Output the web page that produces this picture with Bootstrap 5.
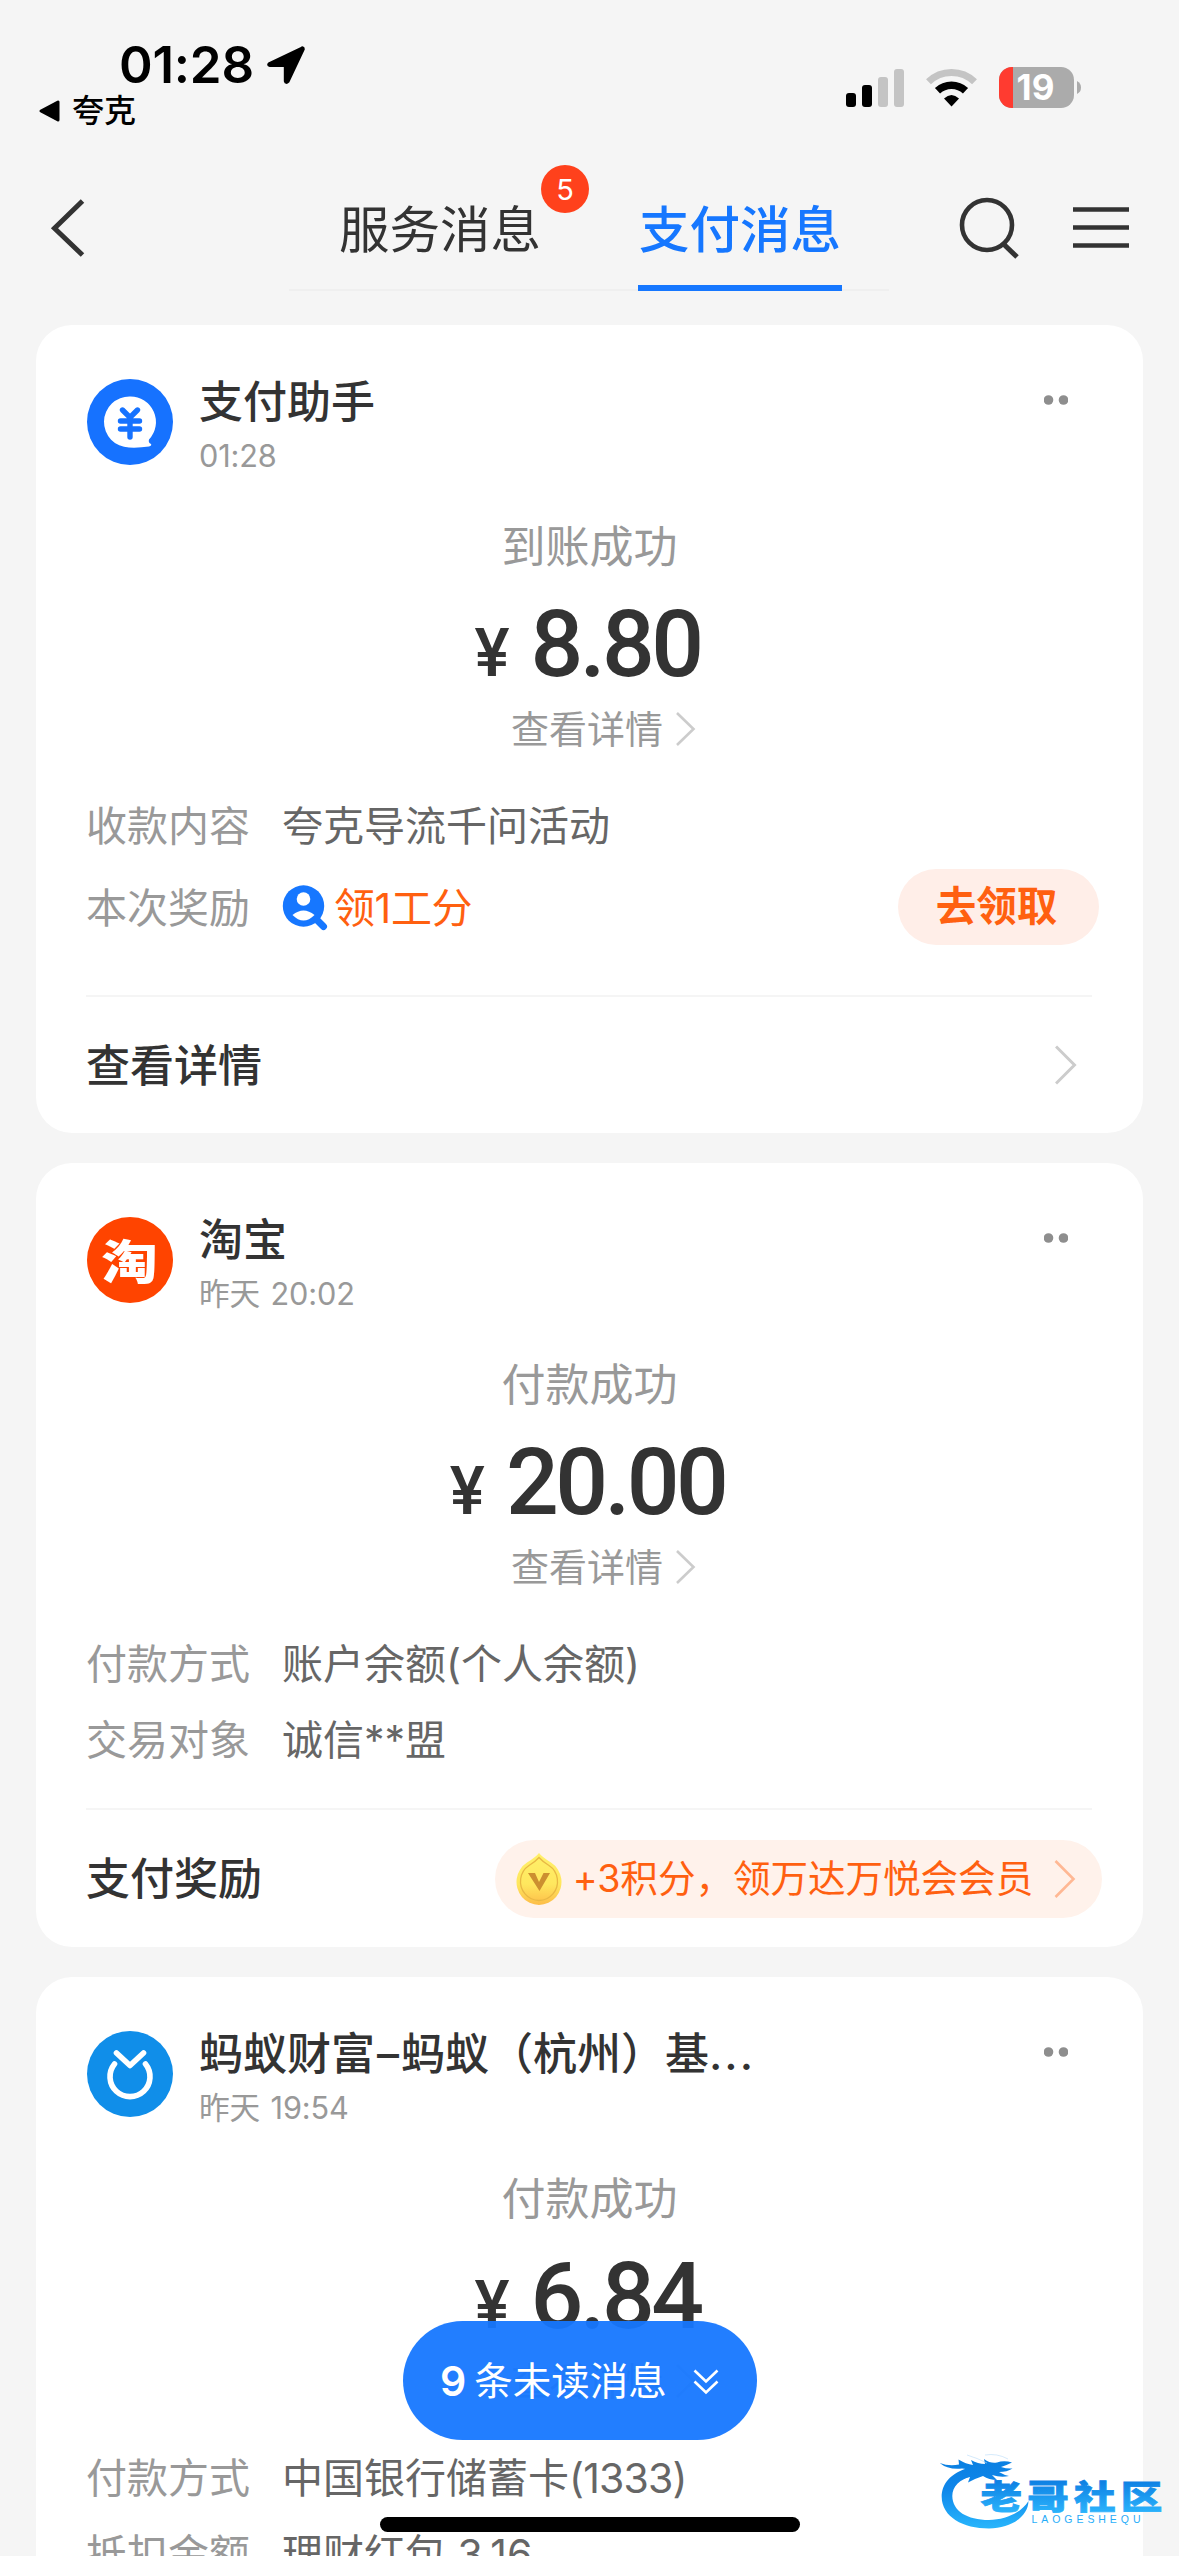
<!DOCTYPE html>
<html lang="zh-CN">
<head>
<meta charset="utf-8">
<meta name="viewport" content="width=device-width, initial-scale=1">
<title>支付消息</title>
<link href="https://cdn.jsdelivr.net/npm/bootstrap@5.3.0/dist/css/bootstrap.min.css" rel="stylesheet">
<style>
  html, body { height: 2556px; overflow: hidden; }
  body { background: #f5f5f5; color: #333; font-family: Inter, "Noto Sans CJK SC", sans-serif; }
  svg { display: block; flex: none; }
  .screen { width: 1179px; height: 2556px; overflow: hidden; }
  .statusbar { height: 150px; padding: 38px 97px 0 38px; color: #000; }
  .clock { font-size: 51px; font-weight: 600; line-height: 54px; letter-spacing: -.2px; padding-left: 81px; gap: 12px; }
  .backapp { font-size: 32px; font-weight: 500; line-height: 34px; gap: 11px; margin-top: 2px; }
  .signals { gap: 22px; padding-top: 29px; }
  .topnav { height: 175px; padding: 0 50px; }
  .tabbar { width: 600px; height: 141px; border-bottom: 2px solid #efefef; margin-left: 203px; padding-left: 49px; gap: 96px; }
  .tab-item { font-size: 50.5px; line-height: 60px; padding: 50px 1px 0; height: 141px; white-space: nowrap; }
  .tab-item.current { color: #1677ff; font-weight: 500; border-bottom: 6px solid #1677ff; }
  .unread-dot { left: 203px; top: 15px; width: 48px; height: 48px; background: #ff411c; color: #fff; font-size: 29px; line-height: 49px; }
  .nav-tools { padding-top: 46px; gap: 51px; }
  .msg-list { padding: 0 36px; gap: 30px; }
  .msg { border-radius: 36px; height: 808px; flex: none; }
  .msg-short { height: 784px; }
  .msg-head { height: 191px; padding: 52px 75px 0 51px; }
  .avatar { margin-top: 2px; }
  .who { padding-left: 26px; }
  .msg-title { font-size: 44px; font-weight: 500; line-height: 50px; white-space: nowrap; }
  .dash { margin: 0 2px; }
  .dots { letter-spacing: 2px; }
  .msg-time { font-size: 30.7px; line-height: 38px; color: #999; margin-top: 10px; word-spacing: 2px; letter-spacing: -.15px; }
  .state { font-size: 44px; line-height: 62px; height: 60px; color: #999; }
  .amount { font-family: Roboto, sans-serif; font-weight: 500; font-size: 93px; line-height: 90px; height: 90px; margin-top: 24px; padding-right: 4px; letter-spacing: -3.6px; gap: 21px; }
  .yen { font-size: 66px; letter-spacing: 0; }
  .more { font-size: 38px; line-height: 56px; height: 56px; color: #999; gap: 12px; margin: 11px 0 30px; padding-left: 28px; }
  .kv { height: 76px; padding: 3px 44px 0 50px; font-size: 41px; color: #666; white-space: nowrap; }
  .kv-tall { height: 88px; }
  .kv-key { width: 196px; color: #999; }
  .num { letter-spacing: -.8px; }
  .kv-icon { margin-top: -3px; }
  .orange { color: #ff6010; }
  .award { padding-left: 6px; letter-spacing: -.4px; }
  .claim { background: #ffeee8; color: #ff6010; font-size: 40.5px; font-weight: 700; width: 201px; height: 76px; line-height: 76px; padding-right: 4px; margin-top: -3px; }
  .msg-foot { margin: auto 51px 0 50px; border-top: 2px solid #f5f5f5; height: 138px; font-size: 44px; font-weight: 500; white-space: nowrap; }
  .msg-short .msg-foot { height: 139px; }
  .foot-label { padding-top: 1px; }
  .reward { background: #fff2eb; width: 607px; height: 78px; font-size: 37.6px; font-weight: 400; margin-right: -10px; padding: 0 26px 0 21px; }
  .reward-text { padding: 1px 10px 0 0; letter-spacing: -.05px; }
  .toast-pill { left: 403px; top: 2321px; width: 354px; height: 119px; background: rgba(22,119,255,.95); color: #fff; font-size: 38.5px; padding: 2px 38px 0 37px; white-space: nowrap; }
  .toast-pill b { font-size: 41px; font-weight: 600; margin-right: 8px; }
  .home-line { left: 380px; top: 2517px; width: 420px; height: 15px; background: #000; }
  .stamp { left: 935px; top: 2447px; }
</style>
</head>
<body>
<div class="screen position-relative">
  <header class="statusbar d-flex justify-content-between">
    <div>
      <div class="clock d-flex align-items-center">01:28
        <svg width="40" height="40" viewBox="0 0 40 40"><path d="M35 3.500 3.500 18.500Q1.500 20 4 20.600H19.300V36Q20 38.500 22 36.500L37.300 4Q37.500 2 35 3.500Z" stroke="#000" stroke-width="3" stroke-linejoin="round"/></svg>
      </div>
      <div class="backapp d-flex align-items-center">
        <svg width="23" height="24" viewBox="0 0 23 24"><path d="M3 12 20 3V21Z" stroke="#000" stroke-width="3" stroke-linejoin="round"/></svg>
        <span>夸克</span>
      </div>
    </div>
    <div class="signals d-flex">
      <svg width="58" height="41" viewBox="0 0 58 41"><g><rect y="26" width="10" height="14" rx="3"/><rect x="16" y="18" width="10" height="22" rx="3"/><g fill="#c4c4c4"><rect x="32" y="10" width="10" height="30" rx="3"/><rect x="48" y="2" width="10" height="38" rx="3"/></g></g></svg>
      <svg width="51" height="41" viewBox="0 0 51 41"><path d="M2.500 14.800A33 33 0 0 1 48.500 14.800" fill="none" stroke="#c4c4c4" stroke-width="7"/><path d="M11.500 23.800A20.500 20.500 0 0 1 39.500 23.800" fill="none" stroke="#000" stroke-width="7.500"/><path d="M18 31.500Q25.500 24.500 33 31.500L25.500 39.500Z"/></svg>
      <svg width="83" height="41" viewBox="0 0 83 41"><defs><clipPath id="cell"><rect width="75" height="41" rx="13"/></clipPath></defs><g clip-path="url(#cell)"><rect width="75" height="41" fill="#ababab"/><rect width="14" height="41" fill="#ff3b30"/></g><path d="M78 14Q82 16 82 20.500T78 27Z" fill="#ababab"/><text x="36.500" y="33" text-anchor="middle" font-family="Inter" font-weight="700" font-size="35" fill="#fff">19</text></svg>
    </div>
  </header>

  <nav class="topnav d-flex">
    <svg class="mt-5" width="36" height="60" viewBox="0 0 36 60"><path d="M32.500 3 4.500 30.200 32.500 57" fill="none" stroke="#333" stroke-width="5"/></svg>
    <div class="tabbar d-flex">
      <div class="tab-item position-relative">服务消息<span class="unread-dot position-absolute rounded-circle text-center">5</span></div>
      <div class="tab-item current">支付消息</div>
    </div>
    <div class="nav-tools d-flex ms-auto">
      <svg width="64" height="64" viewBox="0 0 64 64"><circle cx="29" cy="29" r="25" fill="none" stroke="#333" stroke-width="4.600"/><path d="M45.500 48 59 61" stroke="#333" stroke-width="5"/></svg>
      <svg width="56" height="64" viewBox="0 0 56 64"><path d="M0 13.500H56M0 31.500H56M0 49.500H56" stroke="#333" stroke-width="4.600"/></svg>
    </div>
  </nav>

  <main class="msg-list d-flex flex-column">
    <section class="card border-0 msg">
      <div class="msg-head d-flex">
        <svg class="avatar" width="86" height="86" viewBox="0 0 86 86"><circle cx="43" cy="43" r="43" fill="#1672ff"/><path d="M43 17.500A25.500 25.500 0 0 1 62 60.500Q61 63.500 64 65Q65 66.500 62 67.500Q52 69 42 68.500A25.500 25.500 0 0 1 43 17.500Z" fill="#fff"/><path d="M35.500 31 43 38.500 50.500 31M33.500 42H52.500M33.500 50H52.500M43 38.500V58" fill="none" stroke="#1672ff" stroke-width="5.400" stroke-linecap="round"/></svg>
        <div class="who"><div class="msg-title">支付助手</div><div class="msg-time">01:28</div></div>
        <svg class="ms-auto" width="24" height="44" viewBox="0 0 24 44"><g fill="#8e8e8e"><circle cx="4.500" cy="23" r="4.800"/><circle cx="19.500" cy="23" r="4.800"/></g></svg>
      </div>
      <div class="state text-center">到账成功</div>
      <div class="amount d-flex justify-content-center align-items-baseline"><span class="yen">¥</span><span>8.80</span></div>
      <div class="more d-flex justify-content-center align-items-center">查看详情<svg width="21" height="40" viewBox="0 0 21 40"><path d="M2 4 18.500 20 2 36" fill="none" stroke="#ccc" stroke-width="2.600"/></svg></div>
      <div class="kv d-flex align-items-center"><span class="kv-key">收款内容</span><span>夸克导流千问活动</span></div>
      <div class="kv kv-tall d-flex align-items-center"><span class="kv-key">本次奖励</span>
        <svg class="kv-icon" width="46" height="48" viewBox="0 0 46 48"><circle cx="21.500" cy="23" r="20.700" fill="#1677ff"/><path d="M35 37 41.500 43.500" stroke="#1677ff" stroke-width="7" stroke-linecap="round"/><circle cx="21.500" cy="16" r="6.800" fill="#fff"/><path d="M10.500 32Q21.500 23 32.500 32Q21.500 43 10.500 32Z" fill="#fff"/></svg>
        <span class="orange award">领1工分</span><span class="claim rounded-pill text-center ms-auto">去领取</span></div>
      <div class="msg-foot d-flex align-items-center justify-content-between"><span class="foot-label">查看详情</span><svg width="37" height="44" viewBox="0 0 37 44"><path d="M1 3.500 19.500 22 1 40.500" fill="none" stroke="#ccc" stroke-width="3"/></svg></div>
    </section>

    <section class="card border-0 msg msg-short">
      <div class="msg-head d-flex">
        <svg class="avatar" width="86" height="86" viewBox="0 0 86 86"><circle cx="43" cy="43" r="43" fill="#ff4400"/><text transform="translate(42.500 61.500) scale(1.2 1)" text-anchor="middle" font-family="Noto Sans CJK SC" font-weight="900" font-size="47" fill="#fff">淘</text></svg>
        <div class="who"><div class="msg-title">淘宝</div><div class="msg-time">昨天 20:02</div></div>
        <svg class="ms-auto" width="24" height="44" viewBox="0 0 24 44"><g fill="#8e8e8e"><circle cx="4.500" cy="23" r="4.800"/><circle cx="19.500" cy="23" r="4.800"/></g></svg>
      </div>
      <div class="state text-center">付款成功</div>
      <div class="amount d-flex justify-content-center align-items-baseline"><span class="yen">¥</span><span>20.00</span></div>
      <div class="more d-flex justify-content-center align-items-center">查看详情<svg width="21" height="40" viewBox="0 0 21 40"><path d="M2 4 18.500 20 2 36" fill="none" stroke="#ccc" stroke-width="2.600"/></svg></div>
      <div class="kv d-flex align-items-center"><span class="kv-key">付款方式</span><span>账户余额(个人余额)</span></div>
      <div class="kv d-flex align-items-center"><span class="kv-key">交易对象</span><span>诚信**盟</span></div>
      <div class="msg-foot d-flex align-items-center justify-content-between"><span class="foot-label">支付奖励</span>
        <div class="reward rounded-pill d-flex align-items-center justify-content-between orange">
          <svg width="46" height="54" viewBox="0 0 46 54"><defs><linearGradient id="gold" x1="0" y1="0" x2="0" y2="1"><stop offset="0" stop-color="#fff06a"/><stop offset=".6" stop-color="#ffe75e"/><stop offset="1" stop-color="#fdbd48"/></linearGradient></defs><path d="M23 1Q26 5 35 10.500A22.500 23 0 1 1 11 10.500Q20 5 23 1Z" fill="url(#gold)"/><path d="M23 5.500Q27 10 33 13.500A18.500 19 0 1 1 13 13.500Q19 10 23 5.500Z" fill="none" stroke="#e9b844" stroke-width="1.300"/><path d="M12 21H19L23 30 27.500 21H34L23.500 39Z" fill="#cc8f30"/></svg>
          <span class="reward-text">+3积分，领万达万悦会会员</span>
          <svg width="22" height="40" viewBox="0 0 22 40"><path d="M1.500 2 19.500 20 1.500 38" fill="none" stroke="#ffb894" stroke-width="2.600"/></svg>
        </div>
      </div>
    </section>

    <section class="card border-0 msg">
      <div class="msg-head d-flex">
        <svg class="avatar" width="86" height="86" viewBox="0 0 86 86"><circle cx="43" cy="43" r="43" fill="#108ee9"/><path d="M29.500 22 43 34.500 56.500 22M27.500 33A20 20 0 1 0 58.500 33" fill="none" stroke="#fff" stroke-width="5.600" stroke-linejoin="round" stroke-linecap="round"/></svg>
        <div class="who"><div class="msg-title">蚂蚁财富<span class="dash">–</span>蚂蚁（杭州）基<span class="dots">...</span></div><div class="msg-time">昨天 19:54</div></div>
        <svg class="ms-auto" width="24" height="44" viewBox="0 0 24 44"><g fill="#8e8e8e"><circle cx="4.500" cy="23" r="4.800"/><circle cx="19.500" cy="23" r="4.800"/></g></svg>
      </div>
      <div class="state text-center">付款成功</div>
      <div class="amount d-flex justify-content-center align-items-baseline"><span class="yen">¥</span><span>6.84</span></div>
      <div class="more d-flex justify-content-center align-items-center">查看详情<svg width="21" height="40" viewBox="0 0 21 40"><path d="M2 4 18.500 20 2 36" fill="none" stroke="#ccc" stroke-width="2.600"/></svg></div>
      <div class="kv d-flex align-items-center"><span class="kv-key">付款方式</span><span>中国银行储蓄卡<span class="num">(1333)</span></span></div>
      <div class="kv d-flex align-items-center"><span class="kv-key">抵扣金额</span><span>理财红包 3.16</span></div>
    </section>
  </main>

  <div class="toast-pill position-absolute rounded-pill d-flex align-items-center"><b>9</b>条未读消息
    <svg class="ms-auto" width="26" height="28" viewBox="0 0 26 28"><path d="M1.500 2.500 13 13.500 24.500 2.500M1.500 13.500 13 24.500 24.500 13.500" fill="none" stroke="#fff" stroke-width="2.600"/></svg>
  </div>
  <div class="home-line position-absolute rounded-pill"></div>
  <svg class="stamp position-absolute" width="232" height="90" viewBox="0 0 232 90">
    <defs>
      <linearGradient id="sea" gradientUnits="userSpaceOnUse" x1="0" y1="8" x2="0" y2="82"><stop offset="0" stop-color="#0a7fe0"/><stop offset=".45" stop-color="#0f86ea"/><stop offset="1" stop-color="#28b6fc"/></linearGradient>
      <linearGradient id="wave" gradientUnits="userSpaceOnUse" x1="0" y1="-30" x2="0" y2="3"><stop offset="0" stop-color="#0c7de2"/><stop offset="1" stop-color="#2ab2fb"/></linearGradient>
    </defs>
    <g fill="url(#sea)">
      <path d="M36 20C14 26 6.700 38 6.700 50C7 70 28 81.500 54 81.500C76 81 93 70 93.500 54C86 66 70 73 54 73C32 73 17.500 64 17.300 49C17.300 40 24 32 38 29Z"/>
      <path d="M4.700 16Q14 19.500 24 17.500L23.500 12.500Q31 17 38 18L36 13Q43 17 50 17L49 12Q56 17 62 15.500Q69 13 77 15.500Q72 18 66 20Q72 22 77.500 21.500Q72 25 64 25Q69 28 74 29Q66 31 57 28L62 33Q54 33 48 29L40 32 33 35.500 35 30Q30 31 27 32L31 26Q36 22 27 21.500Q13 23 4.700 16Z"/>
      <path d="M32 8Q42 11 52 16M50 8Q62 6 73 12" fill="none" stroke="#b9dcf8" stroke-width="1" opacity=".6"/>
      <text x="96.500" y="75.500" font-family="Liberation Sans" font-size="10.500" textLength="109">LAOGESHEQU</text>
    </g>
    <text transform="translate(45.500 62) scale(1.240 1)" font-family="Noto Sans CJK SC" font-weight="900" font-size="33.500" letter-spacing="4.200" fill="url(#wave)" stroke="url(#wave)" stroke-width=".8">老哥社区</text>
  </svg>
</div>
<script src="https://cdn.jsdelivr.net/npm/bootstrap@5.3.0/dist/js/bootstrap.bundle.min.js"></script>
</body>
</html>
